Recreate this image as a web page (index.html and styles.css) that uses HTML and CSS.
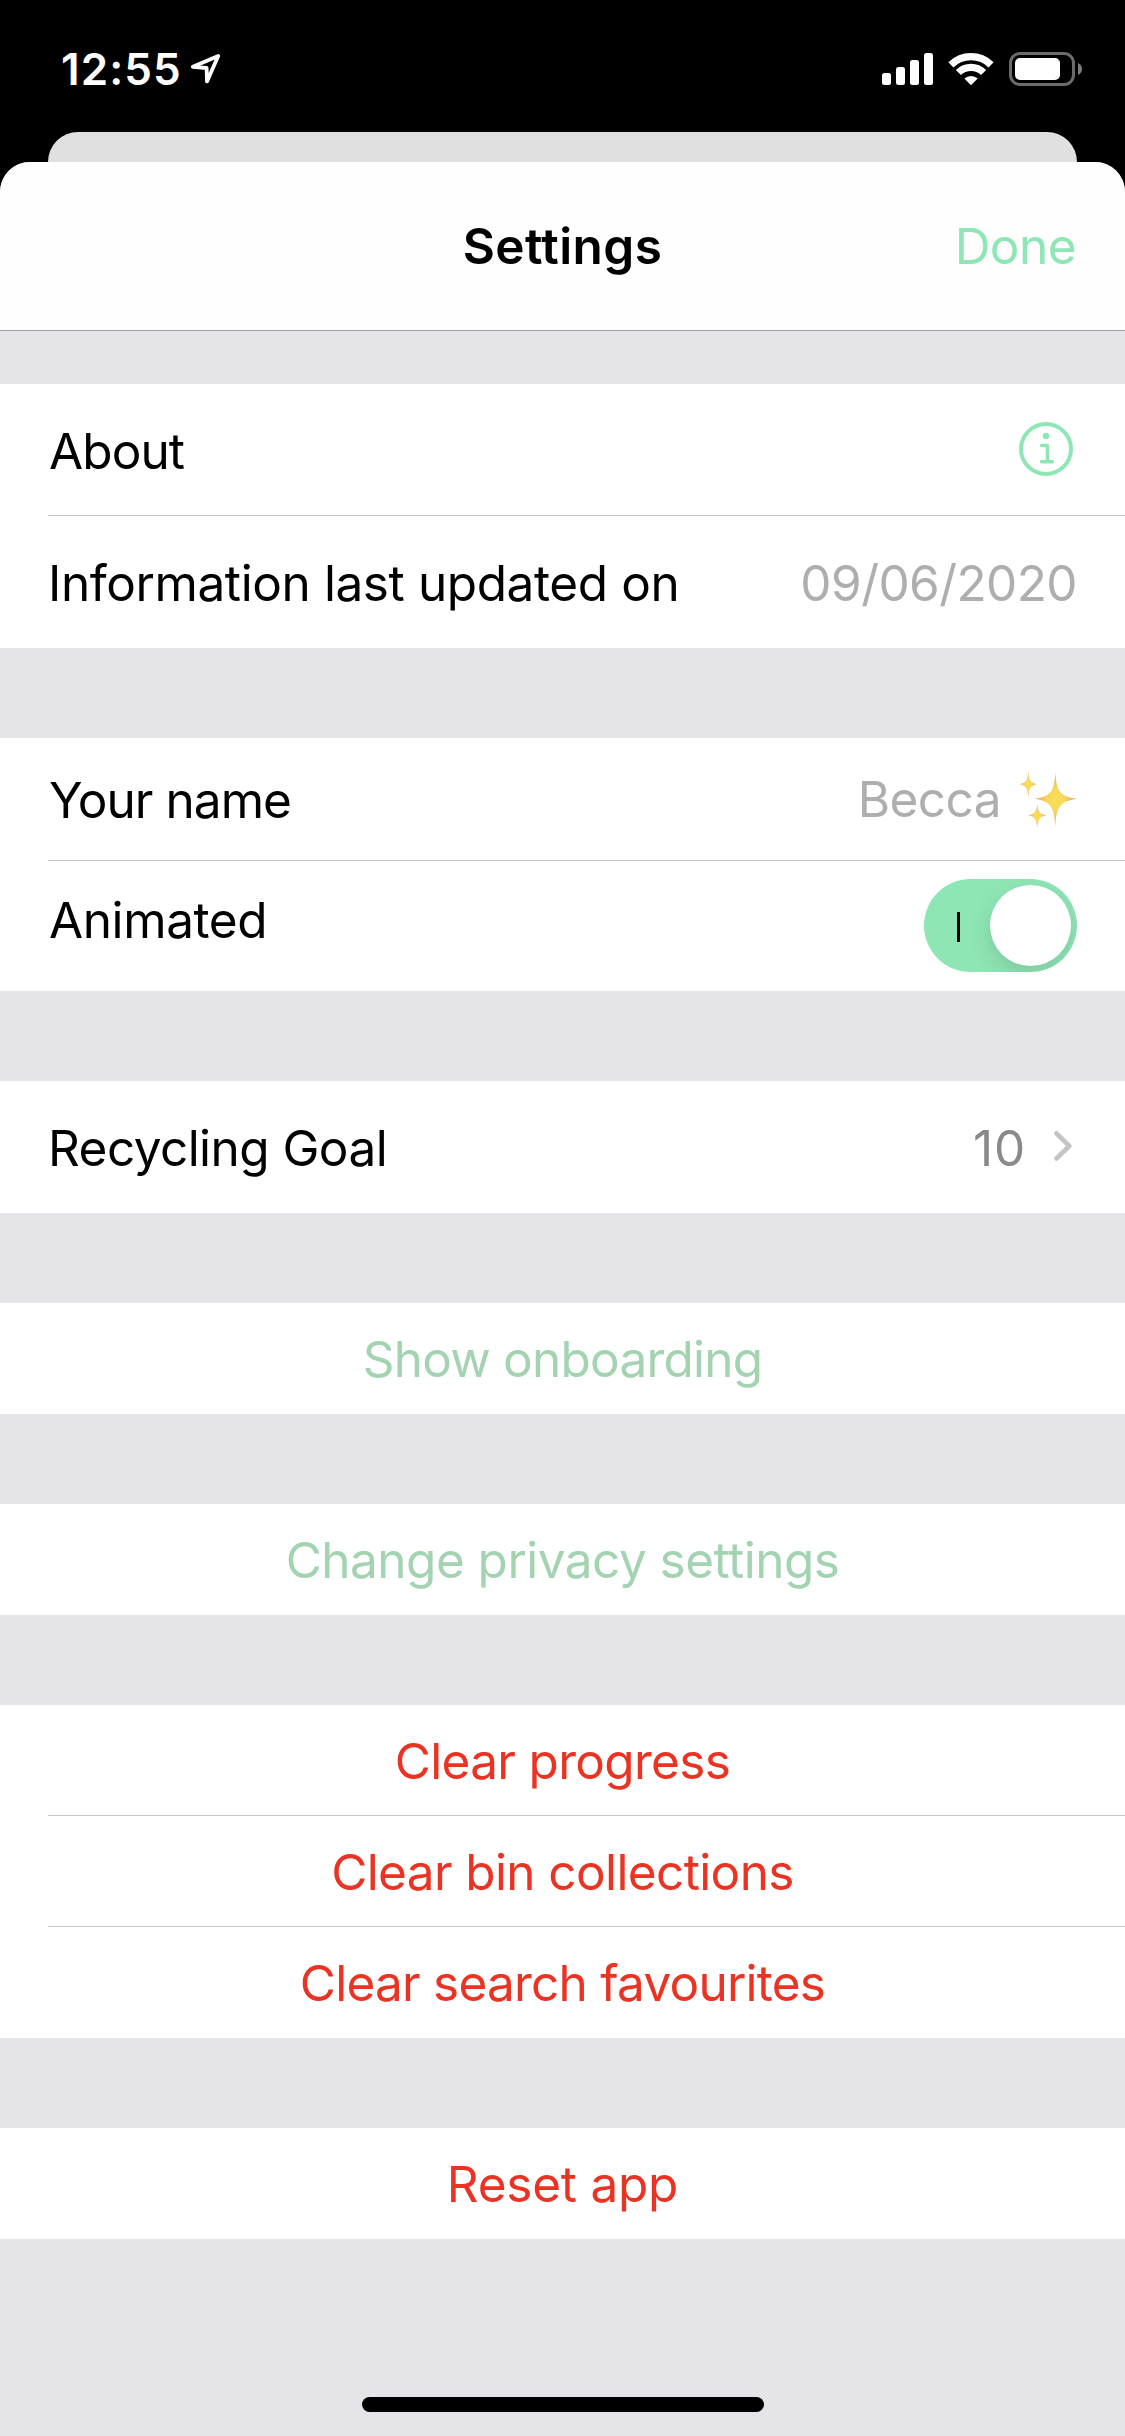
FILE: index.html
```
<!DOCTYPE html>
<html lang="en">
<head>
<meta charset="utf-8">
<title>Settings</title>
<link rel="stylesheet" href="styles.css">
</head>
<body>
<div class="screen">
  <header class="status">
    <div class="status-left">
      <span class="time">12:55</span>
      <svg class="location" width="32" height="32" viewBox="0 0 32 32" aria-label="Location"><path d="M28.2 4 2.8 14.8 16.6 16 17 29.4Z" fill="none" stroke="#fff" stroke-width="3.8" stroke-linejoin="round"/></svg>
    </div>
    <div class="status-right">
      <svg class="signal" width="51" height="34" viewBox="0 0 51 34" fill="#fff" aria-label="Signal"><rect x="0" y="21" width="9" height="12" rx="2.5"/><rect x="14" y="15" width="9" height="18" rx="2.5"/><rect x="28" y="8" width="9" height="25" rx="2.5"/><rect x="42" y="1" width="9" height="32" rx="2.5"/></svg>
      <svg class="wifi" width="46" height="34" viewBox="0 0 46 34" aria-label="Wi-Fi"><g fill="none" stroke="#fff" stroke-width="7.2"><path d="M2.9 12.8A28.8 28.8 0 0 1 43.1 12.8"/><path d="M10.4 20.5A18.1 18.1 0 0 1 35.6 20.5"/></g><path d="M16.3 26.6A9.6 9.6 0 0 1 29.7 26.6L23 33.2Z" fill="#fff"/></svg>
      <svg class="battery" width="74" height="34" viewBox="0 0 74 34" aria-label="Battery"><rect x="1.5" y="1.5" width="63" height="31" rx="9.5" fill="none" stroke="#6b6b6b" stroke-width="3"/><rect x="6" y="6" width="45" height="22" rx="5" fill="#fff"/><path d="M69 11Q73 13 73 17T69 23Z" fill="#7d7d7d"/></svg>
    </div>
  </header>
  <div class="back-card"></div>
  <main class="sheet">
    <nav class="navbar">
      <span></span>
      <h1 class="title">Settings</h1>
      <a class="done">Done</a>
    </nav>
    <div class="groups">
      <section class="group">
        <div class="row">
          <span class="label about">About</span>
          <svg class="info" width="54" height="54" viewBox="0 0 54 54" aria-label="Info"><circle cx="27" cy="27" r="25" fill="none" stroke="#8fe6b5" stroke-width="4"/><circle cx="27" cy="14" r="3.2" fill="#8fe6b5"/><path d="M22.6 23.5H28.5V39.8M22.4 39.8H33.4" fill="none" stroke="#8fe6b5" stroke-width="3.4" stroke-linecap="round" stroke-linejoin="round"/></svg>
        </div>
        <div class="row ruled">
          <span class="label updated">Information last updated on</span>
          <span class="value date">09/06/2020</span>
        </div>
      </section>
      <section class="group">
        <div class="row name-row">
          <span class="label name">Your name</span>
          <span class="value person">Becca
            <svg class="sparkles" width="60" height="60" viewBox="0 0 60 60" aria-label="Sparkles">
              <defs><radialGradient id="gold"><stop offset="0" stop-color="#f9df55"/><stop offset=".4" stop-color="#f8d75b"/><stop offset="1" stop-color="#e9a266"/></radialGradient></defs>
              <g fill="url(#gold)">
                <path d="M38.3 2.5C39.4 20 42 26.5 60 28.8 42 31.4 39.4 38 38.3 56.8 37.2 38 34.8 31.4 17.5 28.8 34.8 26.5 37.2 20 38.3 2.5Z"/>
                <path d="M11.3 1.3C11.9 10 13.2 13 20 14.2 13.2 15.6 11.9 18.6 11.3 27.5 10.7 18.6 9.4 15.6 3 14.2 9.4 13 10.7 10 11.3 1.3Z"/>
                <path d="M20.2 33.8C20.8 41 22.1 44 29.5 45.3 22.1 46.8 20.8 50 20.2 58.3 19.6 50 18.3 46.8 11.3 45.3 18.3 44 19.6 41 20.2 33.8Z"/>
              </g>
            </svg>
          </span>
        </div>
        <div class="row toggle-row ruled">
          <span class="label animated">Animated</span>
          <span class="toggle"><span class="toggle-mark"></span><span class="toggle-knob"></span></span>
        </div>
      </section>
      <section class="group">
        <div class="row">
          <span class="label goal">Recycling Goal</span>
          <span class="detail">10
            <svg class="chevron" width="20" height="32" viewBox="0 0 20 32" aria-hidden="true"><path d="M3.4 3.3 16.4 16 3.4 28.5" fill="none" stroke="#c4c4c6" stroke-width="4.6" stroke-linecap="round" stroke-linejoin="round"/></svg>
          </span>
        </div>
      </section>
      <section class="group">
        <div class="action link onboarding">Show onboarding</div>
      </section>
      <section class="group">
        <div class="action link privacy">Change privacy settings</div>
      </section>
      <section class="group">
        <div class="action danger progress">Clear progress</div>
        <div class="action danger bins ruled">Clear bin collections</div>
        <div class="action danger favourites ruled">Clear search favourites</div>
      </section>
      <section class="group">
        <div class="action danger reset">Reset app</div>
      </section>
    </div>
    <div class="home-bar"></div>
  </main>
</div>
</body>
</html>
```
FILE: styles.css
```
* { box-sizing: border-box; }
body {
  margin: 0;
  background: #000;
  color: #000;
  font: 400 49.5px/60px Inter, "Liberation Sans", sans-serif;
}
svg { display: block; flex: none; }
.screen {
  display: flex;
  flex-direction: column;
  width: 1125px;
  height: 2436px;
  overflow: hidden;
}

/* Status bar */
.status {
  display: flex;
  justify-content: space-between;
  height: 132px;
  padding: 42px 42px 0 61px;
  color: #fff;
}
.status-left, .status-right { display: flex; align-items: flex-start; }
.time { font-size: 44px; font-weight: 600; line-height: 54px; letter-spacing: 1.07px; }
.location { margin: 10px 0 0 8px; }
.status-right { padding-top: 10px; }
.wifi { margin-left: 15px; }
.battery { margin-left: 15px; }

/* Sheet stack */
.back-card {
  height: 62px;
  margin: 0 48px -32px;
  flex: none;
  background: #e0e0e0;
  border-radius: 30px 30px 0 0;
}
.sheet {
  display: flex;
  flex-direction: column;
  flex: 1;
  position: relative;
  background: #e5e4e9;
  border-radius: 30px 30px 0 0;
  overflow: hidden;
}
.navbar {
  display: grid;
  grid-template-columns: 1fr auto 1fr;
  height: 169px;
  padding: 54px 48px 0;
  background: #fefefe;
  border-bottom: 1px solid #a1a1a5;
}
.title { margin: 0; font-size: inherit; font-weight: 600; letter-spacing: .42px; }
.done { justify-self: end; margin-right: 1px; color: #8fe6b5; letter-spacing: -.55px; }

/* Grouped list */
.groups { display: flex; flex-direction: column; gap: 90px; padding-top: 53px; }
.group { background: #fff; }
.row {
  display: flex;
  justify-content: space-between;
  align-items: flex-start;
  height: 132px;
  padding: 37px 48px 0;
}
.ruled {
  background: linear-gradient(#c6c6c8, #c6c6c8) 48px 0 / 100% 1px no-repeat;
}
.group .ruled { margin-top: -1px; padding-top: 38px; height: 133px; }
.group .name-row { height: 123px; padding-top: 32px; }
.group .toggle-row { height: 131px; padding-top: 30px; }
.label, .value, .detail { white-space: nowrap; }
.about { margin-left: 1px; letter-spacing: -.9px; }
.updated { letter-spacing: -.4px; }
.name { margin-left: 1px; letter-spacing: -.96px; }
.animated { margin-left: 1px; letter-spacing: -.4px; }
.goal { letter-spacing: -.55px; }
.value { color: #aeaeb0; letter-spacing: -.57px; }
.person { display: flex; gap: 16px; margin-top: -1px; }
.sparkles { margin-top: 1px; }
.detail { display: flex; gap: 27px; color: #8a8a8d; letter-spacing: .87px; }
.chevron { margin: 12px 4px 0 0; }
.info { margin: 1px 4px 0 0; }

.toggle {
  display: flex;
  justify-content: space-between;
  align-items: center;
  width: 153px;
  height: 93px;
  margin-top: -11px;
  padding: 0 6px 0 33px;
  border-radius: 47px;
  background: #8fe6b5;
  overflow: hidden;
}
.toggle-mark { width: 3px; height: 30px; margin-top: 3px; background: #000; }
.toggle-knob {
  width: 81px;
  height: 81px;
  border-radius: 50%;
  background: #fff;
  box-shadow: 0 9px 24px rgba(0, 0, 0, .13);
}

/* Button rows */
.action, .group .action.ruled { height: 111px; padding-top: 26px; text-align: center; }
.group .action.ruled { height: 112px; padding-top: 27px; }
.link { color: #a3d3b1; }
.danger { color: #ea3323; }
.onboarding { letter-spacing: -.77px; }
.privacy { letter-spacing: -.52px; }
.progress { letter-spacing: -.68px; }
.bins { letter-spacing: -.62px; }
.favourites { letter-spacing: -.76px; }
.reset { letter-spacing: -.25px; }

.home-bar {
  width: 402px;
  height: 15px;
  margin: auto auto 24px;
  border-radius: 8px;
  background: #000;
}
```
